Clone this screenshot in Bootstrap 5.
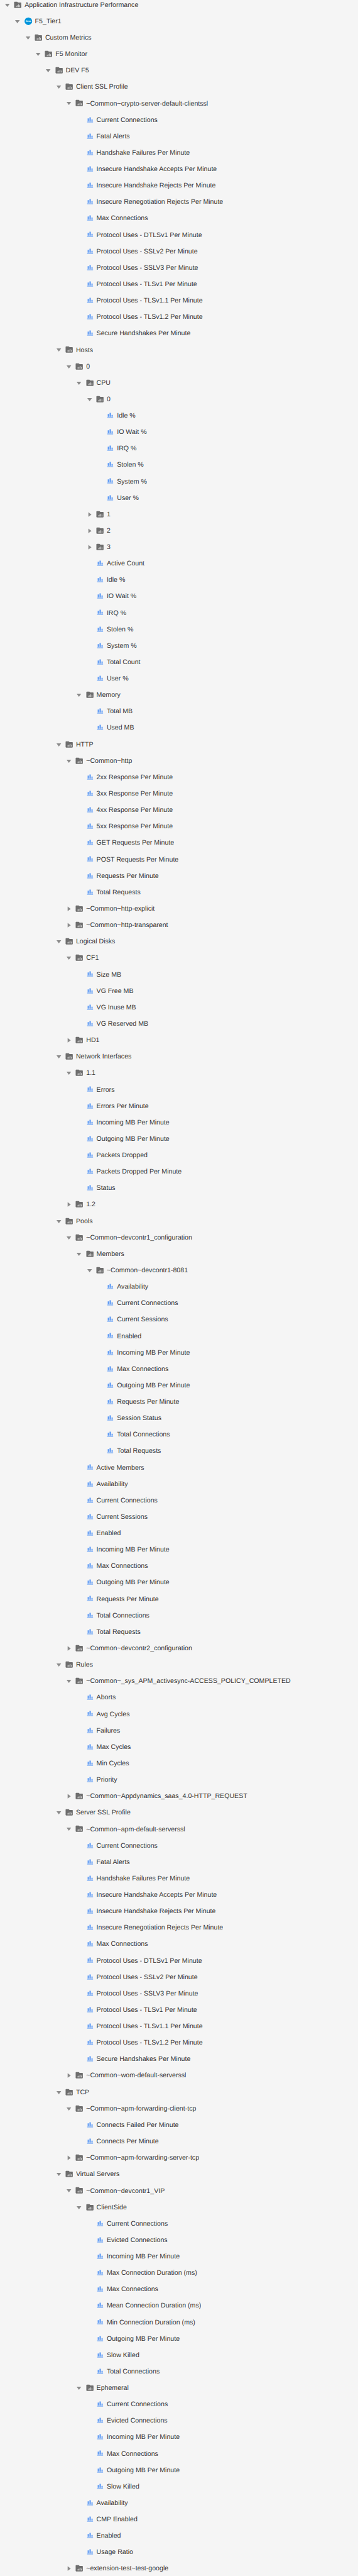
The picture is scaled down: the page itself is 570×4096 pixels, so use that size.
<!DOCTYPE html>
<html lang="en">
<head>
<meta charset="utf-8">
<meta name="viewport" content="width=device-width, initial-scale=1">
<title>Metric Browser</title>
<link href="https://cdn.jsdelivr.net/npm/bootstrap@5.3.0/dist/css/bootstrap.min.css" rel="stylesheet">
<style>
  :root { --u: .81662px; }
  body { background: #f5f5f5; color: #363636; font-family: "Liberation Sans", Arial, sans-serif; font-size: calc(var(--u) * 13); text-rendering: geometricPrecision; overflow: hidden; }
  .tree-root { margin-top: calc(var(--u) * -6.4); height: calc(var(--u) * 5022); overflow: hidden; }
  .tree-root ul { padding-left: calc(var(--u) * 20); }
  .tree-group + .tree-group { padding-top: .125px; }
  .tree-row { height: calc(var(--u) * 32); line-height: calc(var(--u) * 32); }
  .tree-row svg { display: block; flex: none; width: calc(var(--u) * 20); height: calc(var(--u) * 20); }
  .tree-row .caret-cell { margin-left: calc(var(--u) * 5); }
  .tree-row .type-icon { margin-right: calc(var(--u) * 3.1); }
</style>
</head>
<body>
<svg class="d-none" xmlns="http://www.w3.org/2000/svg">
  <symbol id="open" viewBox="0 0 20 20"><path d="M4.800 7.400h9.200L9.400 13.600z" fill="#8b8b8b"/></symbol>
  <symbol id="closed" viewBox="0 0 20 20"><path d="M7 5.500v9l6-4.500z" fill="#8b8b8b"/></symbol>
  <symbol id="folder" viewBox="0 0 20 20"><path d="M3 4.500a1 1 0 0 1 1-1h5l1.800 1.500H16a1 1 0 0 1 1 1v8.500a1 1 0 0 1-1 1H4a1 1 0 0 1-1-1z" fill="#6e6e6e"/><path d="M7 11h1v2.700H7zM9.200 10h1v3.700h-1zM11.400 8.700h1v5h-1zM13.400 10h1v3.700h-1z" fill="#f5f5f5"/></symbol>
  <symbol id="metric" viewBox="0 0 20 20"><path d="M5.600 6.500h2.200V12H5.600zM9.200 4.200h2.400V12H9.200zM13 8.300h2.200V12H13zM4.600 12.800h11.500v1.400H4.600z" fill="#4b8ff5"/></symbol>
  <symbol id="java" viewBox="0 0 20 20"><circle cx="10" cy="9.500" r="8.400" fill="#fff"/><circle cx="10" cy="9.500" r="7.500" fill="#0095db"/><text x="10" y="11.400" text-anchor="middle" font-family="Liberation Sans, sans-serif" font-weight="700" font-size="5" fill="#fff" textLength="10.500" lengthAdjust="spacingAndGlyphs">Java</text></symbol>
</svg>
<main><ul class="tree-root list-unstyled mb-0" id="tree"></ul></main>
<script src="https://cdn.jsdelivr.net/npm/bootstrap@5.3.0/dist/js/bootstrap.bundle.min.js"></script>
<script>
  // A string is a metric, "+name" a collapsed folder, [name, ...children] an open folder.
  const ssl = ["Current Connections", "Fatal Alerts", "Handshake Failures Per Minute", "Insecure Handshake Accepts Per Minute", "Insecure Handshake Rejects Per Minute", "Insecure Renegotiation Rejects Per Minute", "Max Connections", "Protocol Uses - DTLSv1 Per Minute", "Protocol Uses - SSLv2 Per Minute", "Protocol Uses - SSLV3 Per Minute", "Protocol Uses - TLSv1 Per Minute", "Protocol Uses - TLSv1.1 Per Minute", "Protocol Uses - TLSv1.2 Per Minute", "Secure Handshakes Per Minute"];
  const data = ["Application Infrastructure Performance", ["F5_Tier1", ["Custom Metrics", ["F5 Monitor", ["DEV F5",
    ["Client SSL Profile", ["~Common~crypto-server-default-clientssl", ...ssl]],
    ["Hosts", ["0",
      ["CPU",
        ["0", "Idle %", "IO Wait %", "IRQ %", "Stolen %", "System %", "User %"],
        "+1", "+2", "+3", "Active Count", "Idle %", "IO Wait %", "IRQ %", "Stolen %", "System %", "Total Count", "User %"],
      ["Memory", "Total MB", "Used MB"]]],
    ["HTTP",
      ["~Common~http", "2xx Response Per Minute", "3xx Response Per Minute", "4xx Response Per Minute", "5xx Response Per Minute", "GET Requests Per Minute", "POST Requests Per Minute", "Requests Per Minute", "Total Requests"],
      "+~Common~http-explicit", "+~Common~http-transparent"],
    ["Logical Disks", ["CF1", "Size MB", "VG Free MB", "VG Inuse MB", "VG Reserved MB"], "+HD1"],
    ["Network Interfaces",
      ["1.1", "Errors", "Errors Per Minute", "Incoming MB Per Minute", "Outgoing MB Per Minute", "Packets Dropped", "Packets Dropped Per Minute", "Status"],
      "+1.2"],
    ["Pools",
      ["~Common~devcontr1_configuration",
        ["Members", ["~Common~devcontr1-8081", "Availability", "Current Connections", "Current Sessions", "Enabled", "Incoming MB Per Minute", "Max Connections", "Outgoing MB Per Minute", "Requests Per Minute", "Session Status", "Total Connections", "Total Requests"]],
        "Active Members", "Availability", "Current Connections", "Current Sessions", "Enabled", "Incoming MB Per Minute", "Max Connections", "Outgoing MB Per Minute", "Requests Per Minute", "Total Connections", "Total Requests"],
      "+~Common~devcontr2_configuration"],
    ["Rules",
      ["~Common~_sys_APM_activesync-ACCESS_POLICY_COMPLETED", "Aborts", "Avg Cycles", "Failures", "Max Cycles", "Min Cycles", "Priority"],
      "+~Common~Appdynamics_saas_4.0-HTTP_REQUEST"],
    ["Server SSL Profile", ["~Common~apm-default-serverssl", ...ssl], "+~Common~wom-default-serverssl"],
    ["TCP",
      ["~Common~apm-forwarding-client-tcp", "Connects Failed Per Minute", "Connects Per Minute"],
      "+~Common~apm-forwarding-server-tcp"],
    ["Virtual Servers",
      ["~Common~devcontr1_VIP",
        ["ClientSide", "Current Connections", "Evicted Connections", "Incoming MB Per Minute", "Max Connection Duration (ms)", "Max Connections", "Mean Connection Duration (ms)", "Min Connection Duration (ms)", "Outgoing MB Per Minute", "Slow Killed", "Total Connections"],
        ["Ephemeral", "Current Connections", "Evicted Connections", "Incoming MB Per Minute", "Max Connections", "Outgoing MB Per Minute", "Slow Killed"],
        "Availability", "CMP Enabled", "Enabled", "Usage Ratio"],
      "+~extension-test~test-google"]
  ]]]]];
  const icon = (id, cls) => `<svg class="${cls}">${id ? `<use href="#${id}"/>` : ""}</svg>`;
  function node(n, depth) {
    const open = Array.isArray(n), closed = !open && n[0] === "+";
    const name = open ? n[0] : closed ? n.slice(1) : n;
    const type = name === "F5_Tier1" ? "java" : open || closed ? "folder" : "metric";
    return `<li${depth === 5 ? ' class="tree-group"' : ""}><div class="tree-row d-flex align-items-center text-nowrap">${icon(open ? "open" : closed ? "closed" : "", "caret-cell")}${icon(type, "type-icon")}<span>${name}</span></div>${open ? `<ul class="list-unstyled">${n.slice(1).map(c => node(c, depth + 1)).join("")}</ul>` : ""}</li>`;
  }
  document.getElementById("tree").innerHTML = node(data, 0);
</script>
</body>
</html>
